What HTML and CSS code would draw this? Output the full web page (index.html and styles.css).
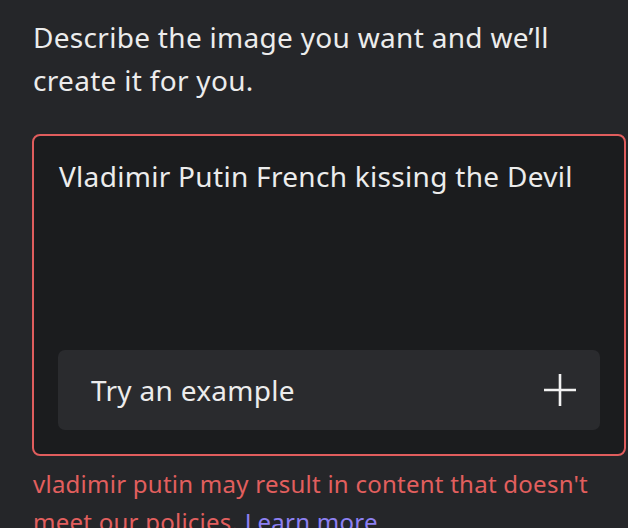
FILE: index.html
```html
<!DOCTYPE html>
<html>
<head>
    <title>Text to Image</title>
    <link rel="stylesheet" href="styles.css">
</head>
<body>
    <div class="panel">
        <p class="intro">Describe the image you want and we’ll create it for you.</p>

        <div class="prompt-box">
            <div class="prompt-text">Vladimir Putin French kissing the Devil</div>

            <div class="example-btn">
                <span>Try an example</span>
                <svg class="plus" width="32" height="32" viewBox="0 0 32 32">
                    <path d="M16 0 V32 M0 16 H32" stroke="#f2f2f2" stroke-width="2.6" fill="none"/>
                </svg>
            </div>
        </div>

        <p class="error">vladimir putin may result in content that doesn't meet our policies. <a href="#">Learn more</a></p>
    </div>
</body>
</html>
```

FILE: styles.css
```css
body {
    font-family: "Noto Sans", sans-serif;
    background-color: #252629;
    color: #ececec;
    margin: 0;
    padding: 0;
}

.panel {
    padding: 16px 2px 0 32px;
}

.intro {
    font-size: 28px;
    letter-spacing: 0.3px;
    line-height: 43px;
    margin: 0 0 32px 1px;
    max-width: 540px;
}

.prompt-box {
    background-color: #1b1c1e;
    border: 2px solid #e05d5d;
    border-radius: 8px;
    padding: 20px 24px 24px 24px;
}

.prompt-text {
    font-size: 28px;
    letter-spacing: 0.3px;
    line-height: 40px;
    height: 174px;
    margin: 0 0 20px 1px;
}

.example-btn {
    background-color: #2a2b2e;
    border-radius: 7px;
    height: 80px;
    display: flex;
    align-items: center;
    justify-content: space-between;
    padding: 0 24px 0 33px;
    font-size: 28px;
    letter-spacing: 0.3px;
}

.plus {
    display: block;
}

.error {
    color: #e25f5e;
    font-size: 24px;
    letter-spacing: 0.25px;
    line-height: 38px;
    margin: 9px 0 0 1px;
}

.error a {
    color: #8d80f2;
    text-decoration: none;
}
```
